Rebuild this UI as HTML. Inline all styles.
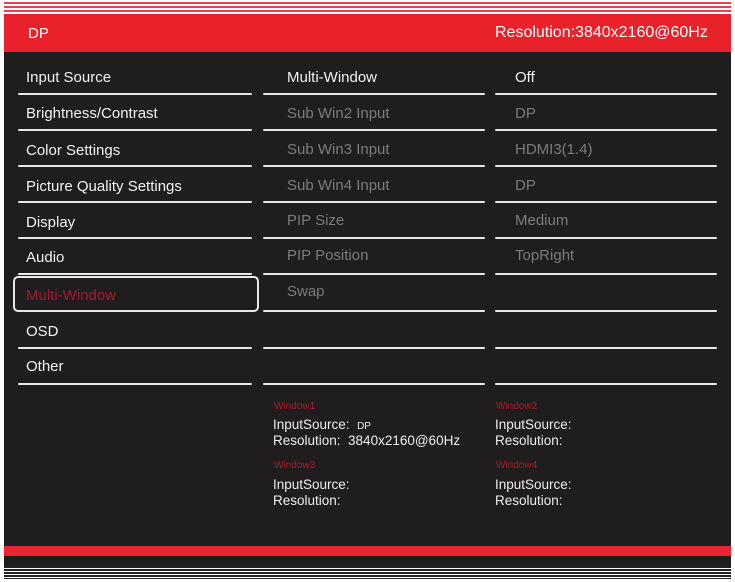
<!DOCTYPE html>
<html><head><meta charset="utf-8"><style>
*{margin:0;padding:0;box-sizing:border-box}
body{width:735px;height:582px;background:#fff;position:relative;overflow:hidden;font-family:"Liberation Sans",Arial,sans-serif}
.a{position:absolute}
.t{position:absolute;font-size:15px;color:#f2f2f2;white-space:nowrap}
.g{color:#7d7b7b}
.ln{position:absolute;height:2px;background:#e8e8e8;border-radius:1px}
.s{position:absolute;font-size:13.5px;color:#eee;line-height:16px;white-space:nowrap}
.r{position:absolute;font-size:10px;color:#b01a28;white-space:nowrap}
</style></head><body>
<div class="a" style="left:4px;top:0;width:727px;height:14px;background:repeating-linear-gradient(#fff 0,#fff 2px,#e8434a 2px,#e8434a 4px)"></div>
<div class="a" style="left:4px;top:14px;width:727px;height:38px;background:#e8212b"></div>
<div class="t" style="left:28px;top:25px;color:#fff">DP</div>
<div class="t" style="left:495px;top:24px;color:#fff;font-size:16px">Resolution:3840x2160@60Hz</div>
<div class="a" style="left:4px;top:52px;width:727px;height:494px;background:#1f1d1d"></div>
<div class="a" style="left:4px;top:546px;width:727px;height:10px;background:#ea2430"></div>
<div class="a" style="left:4px;top:556px;width:727px;height:10px;background:#1f1d1d"></div>
<div class="a" style="left:4px;top:566px;width:727px;height:13px;background:repeating-linear-gradient(#222 0,#222 2px,#fff 2px,#fff 3px)"></div>

<div class="t" style="left:26px;top:69px">Input Source</div>
<div class="t" style="left:26px;top:105px">Brightness/Contrast</div>
<div class="t" style="left:26px;top:142px">Color Settings</div>
<div class="t" style="left:26px;top:178px">Picture Quality Settings</div>
<div class="t" style="left:26px;top:214px">Display</div>
<div class="t" style="left:26px;top:249px">Audio</div>
<div class="a" style="left:13px;top:276px;width:246px;height:36px;border:2px solid #e8e8e8;border-radius:5px"></div>
<div class="t" style="left:26px;top:287px;color:#a51a30">Multi-Window</div>
<div class="t" style="left:26px;top:323px">OSD</div>
<div class="t" style="left:26px;top:358px">Other</div>

<div class="t" style="left:287px;top:69px">Multi-Window</div>
<div class="t g" style="left:287px;top:105px">Sub Win2 Input</div>
<div class="t g" style="left:287px;top:141px">Sub Win3 Input</div>
<div class="t g" style="left:287px;top:177px">Sub Win4 Input</div>
<div class="t g" style="left:287px;top:212px">PIP Size</div>
<div class="t g" style="left:287px;top:247px">PIP Position</div>
<div class="t g" style="left:287px;top:283px">Swap</div>

<div class="t" style="left:515px;top:69px">Off</div>
<div class="t g" style="left:515px;top:105px">DP</div>
<div class="t g" style="left:515px;top:141px">HDMI3(1.4)</div>
<div class="t g" style="left:515px;top:177px">DP</div>
<div class="t g" style="left:515px;top:212px">Medium</div>
<div class="t g" style="left:515px;top:247px">TopRight</div>

<div class="ln" style="left:18px;top:93px;width:234px"></div>
<div class="ln" style="left:18px;top:129px;width:234px"></div>
<div class="ln" style="left:18px;top:165px;width:234px"></div>
<div class="ln" style="left:18px;top:201px;width:234px"></div>
<div class="ln" style="left:18px;top:237px;width:234px"></div>
<div class="ln" style="left:18px;top:273px;width:234px"></div>
<div class="ln" style="left:18px;top:347px;width:234px"></div>
<div class="ln" style="left:18px;top:383px;width:234px"></div>

<div class="ln" style="left:263px;top:93px;width:222px"></div>
<div class="ln" style="left:263px;top:129px;width:222px"></div>
<div class="ln" style="left:263px;top:165px;width:222px"></div>
<div class="ln" style="left:263px;top:201px;width:222px"></div>
<div class="ln" style="left:263px;top:237px;width:222px"></div>
<div class="ln" style="left:263px;top:273px;width:222px"></div>
<div class="ln" style="left:263px;top:310px;width:222px"></div>
<div class="ln" style="left:263px;top:347px;width:222px"></div>
<div class="ln" style="left:263px;top:383px;width:222px"></div>

<div class="ln" style="left:495px;top:93px;width:222px"></div>
<div class="ln" style="left:495px;top:129px;width:222px"></div>
<div class="ln" style="left:495px;top:165px;width:222px"></div>
<div class="ln" style="left:495px;top:201px;width:222px"></div>
<div class="ln" style="left:495px;top:237px;width:222px"></div>
<div class="ln" style="left:495px;top:273px;width:222px"></div>
<div class="ln" style="left:495px;top:310px;width:222px"></div>
<div class="ln" style="left:495px;top:347px;width:222px"></div>
<div class="ln" style="left:495px;top:383px;width:222px"></div>

<div class="r" style="left:274px;top:401px">Window1</div>
<div class="s" style="left:273px;top:417px">InputSource: &nbsp;<span style="font-size:10px">DP</span></div>
<div class="s" style="left:273px;top:433px">Resolution: &nbsp;3840x2160@60Hz</div>
<div class="r" style="left:274px;top:460px">Window3</div>
<div class="s" style="left:273px;top:477px">InputSource:</div>
<div class="s" style="left:273px;top:493px">Resolution:</div>
<div class="r" style="left:496px;top:401px">Window2</div>
<div class="s" style="left:495px;top:417px">InputSource:</div>
<div class="s" style="left:495px;top:433px">Resolution:</div>
<div class="r" style="left:496px;top:460px">Window4</div>
<div class="s" style="left:495px;top:477px">InputSource:</div>
<div class="s" style="left:495px;top:493px">Resolution:</div>
</body></html>
